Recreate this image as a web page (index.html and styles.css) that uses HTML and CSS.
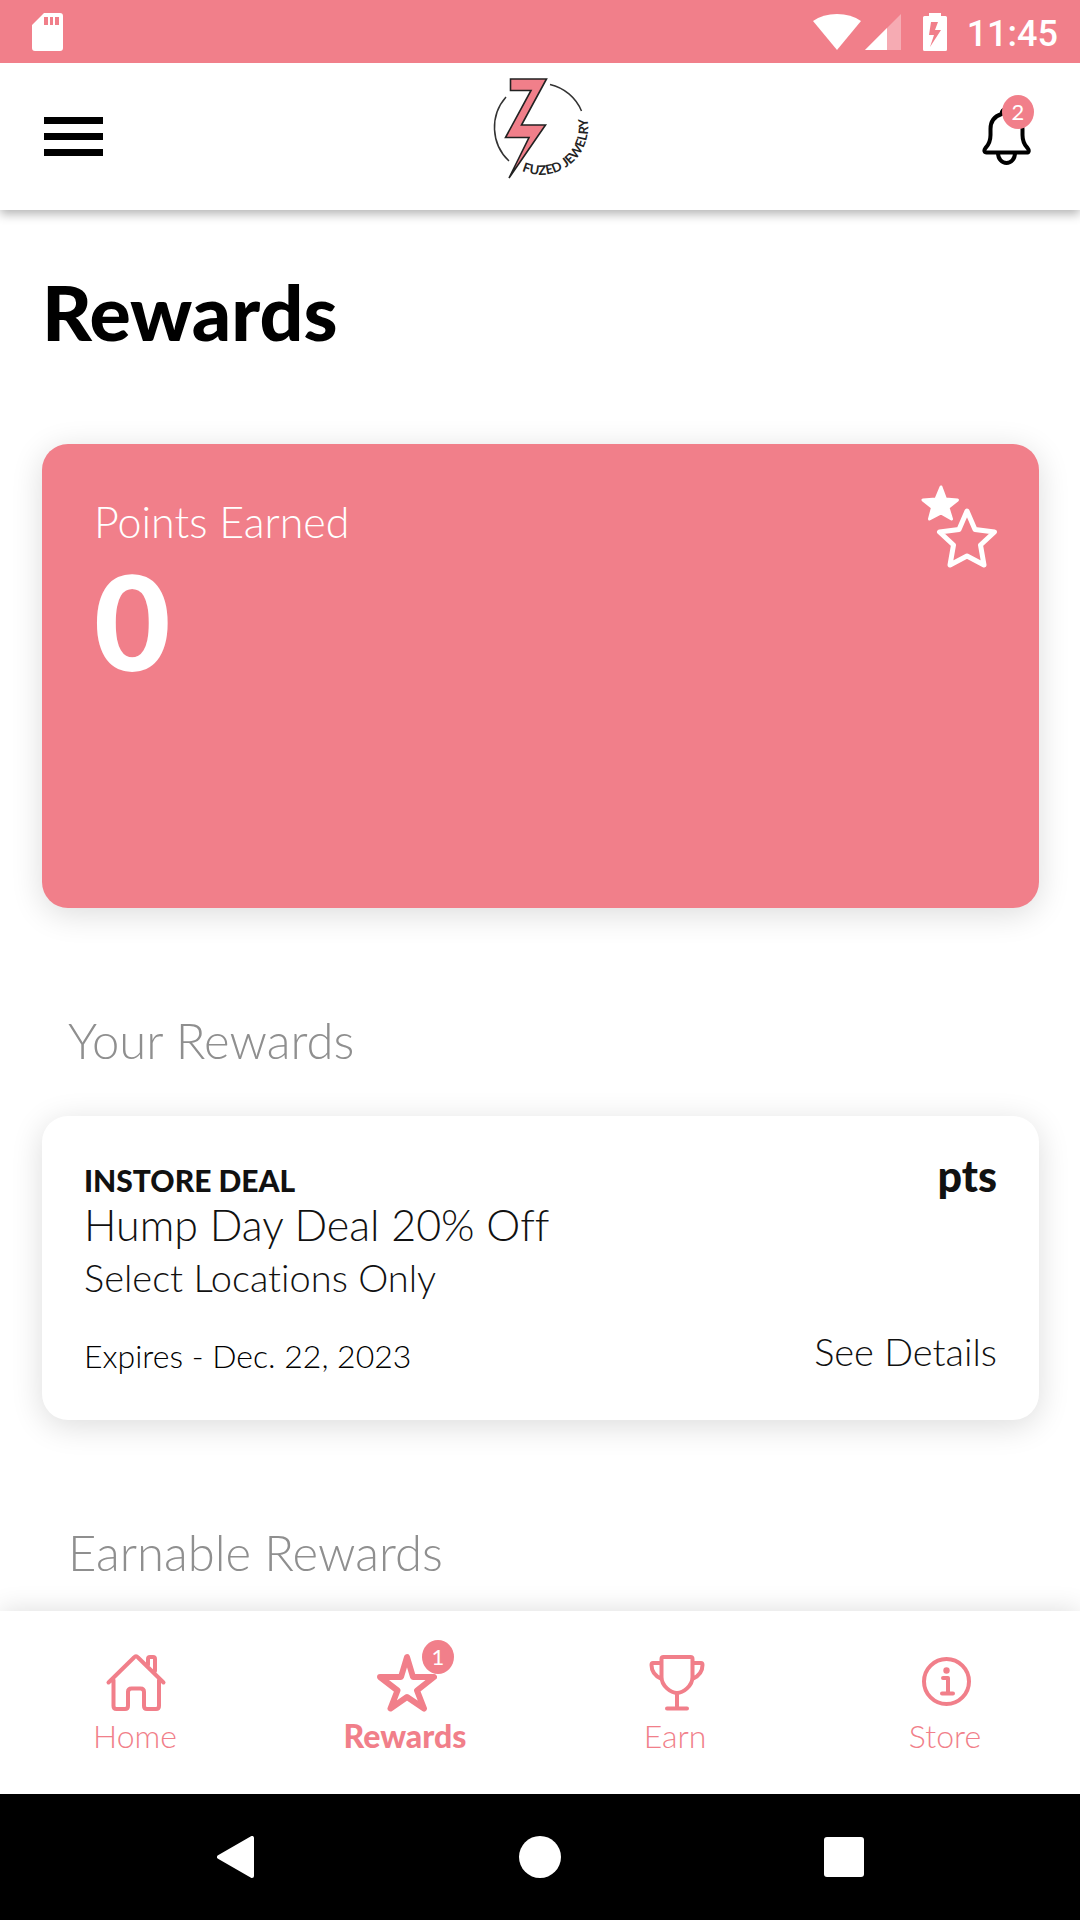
FILE: index.html
```html
<!DOCTYPE html>
<html lang="en">
<head>
<meta charset="utf-8">
<meta name="viewport" content="width=device-width, initial-scale=1">
<title>Rewards - Fuzed Jewelry</title>
<link rel="stylesheet" href="styles.css">
</head>
<body>
<div class="status">
  <svg class="status-card" width="32" height="38" viewBox="0 0 32 38" fill="currentColor" aria-hidden="true"><path fill-rule="evenodd" d="M12 0h16a3 3 0 0 1 3 3v32a3 3 0 0 1-3 3H3a3 3 0 0 1-3-3V12zM12 4v8h4V4zM18 4v8h3V4zM23 4v8h4V4z"/></svg>
  <div class="status-right">
    <svg width="48" height="38" viewBox="0 0 48 38" fill="currentColor" aria-hidden="true"><path d="M24 37 0 8Q10 1 24 1t24 7z"/></svg>
    <svg class="signal" width="36" height="38" viewBox="0 0 36 38" fill="currentColor" aria-hidden="true"><path opacity=".35" d="M0 37 36 1v36z"/><path d="M0 37 22 15v22z"/></svg>
    <svg class="battery" width="24" height="38" viewBox="0 0 24 38" fill="currentColor" aria-hidden="true"><path fill-rule="evenodd" d="M6 0h12v3h4.500a1.500 1.500 0 0 1 1.500 1.500v32a1.500 1.500 0 0 1-1.500 1.500h-21a1.500 1.500 0 0 1-1.500-1.500v-32a1.500 1.500 0 0 1 1.500-1.500H6zM8 9 6 22h5L7 34 18 17h-6l3-8z"/></svg>
    <span class="time">11:45</span>
  </div>
</div>
<header class="header">
  <button class="icon-button menu" type="button" aria-label="Menu">
    <svg width="60" height="40" viewBox="0 0 60 40" aria-hidden="true"><path d="M0 0h59v7H0zM0 16h59v7H0zM0 32h59v7H0z"/></svg>
  </button>
  <svg class="logo" width="104" height="110" viewBox="488 74 104 110" role="img" aria-label="Fuzed Jewelry">
    <g fill="none" stroke="#333" stroke-width="1.500"><path d="M506 97A46 46 0 0 0 509 161"/><path d="M550 84.500A45 45 0 0 1 581.500 111"/></g>
    <path d="M510.500 79H546.500L521.500 125H545.500L509 178 529 137.500H505.500L531 90.500H510.500z" fill="#f17f8a" stroke="#222" stroke-width="1.600"/>
    <path id="ring" d="M522 171A47.500 47.500 0 0 0 584 108" fill="none"/>
    <text class="logo-text"><textPath href="#ring">FUZED JEWELRY</textPath></text>
  </svg>
  <button class="icon-button bell" type="button" aria-label="Notifications">
    <svg width="50" height="60" viewBox="0 0 50 60" fill="none" stroke="#000" stroke-width="4" stroke-linejoin="round" aria-hidden="true"><path d="M24.500 2c-3 0-5 2-5 5C12 9.500 8.500 15 8.500 22v6c0 7-2 10-5 13-2 2.500-1 4.500 1 4.500h40c2.500 0 3-2 1-4.500-3-3-5-6-5-13v-6c0-7-3.500-12.500-11-15 0-3-2-5-5-5z"/><path d="M16 46c0 6 4 10 8.500 10s8.500-4 8.500-10"/></svg>
    <span class="badge">2</span>
  </button>
</header>
<main class="main">
  <h1 class="title">Rewards</h1>
  <section class="card points">
    <div>
      <h2 class="points-label">Points Earned</h2>
      <p class="points-value">0</p>
    </div>
    <svg width="80" height="88" viewBox="0 0 80 88" aria-hidden="true"><path d="M21 3 25.500 15 37.500 16 28 23.500 31.500 35 21 29 9.500 35 12.500 23.500 3 16 16 15z" fill="#fff" stroke="#fff" stroke-width="3" stroke-linejoin="round"/><path d="M47 27 55 45.500 74.500 48 60.500 61 64 81 47 72 30 81 33.500 61 19.500 48 39 45.500z" fill="none" stroke="#fff" stroke-width="5" stroke-linejoin="round"/></svg>
  </section>
  <h2 class="heading">Your Rewards</h2>
  <article class="card reward">
    <div class="reward-info">
      <p class="reward-kind">INSTORE DEAL</p>
      <h3 class="reward-name">Hump Day Deal 20% Off</h3>
      <p class="reward-note">Select Locations Only</p>
      <p class="reward-expiry">Expires - Dec. 22, 2023</p>
    </div>
    <div class="reward-side">
      <p class="reward-points">pts</p>
      <a class="reward-link" href="#details">See Details</a>
    </div>
  </article>
  <h2 class="heading">Earnable Rewards</h2>
</main>
<nav class="tabs" aria-label="Main">
  <a class="tab" href="#home">
    <svg class="tab-icon" viewBox="0 0 64 64" aria-hidden="true"><path d="M5.500 32.500 31 7.500Q33 5 35 7.500L60.500 32.500M10.500 30v26q0 3 3 3H22q3 0 3-3V42q0-3.500 3.500-3.500h9q3.500 0 3.500 3.500v14q0 3 3 3h9q3 0 3-3V30M45 15V9q0-2 2-2h3q2 0 2 2v12"/></svg>
    <span>Home</span>
  </a>
  <a class="tab tab-active" href="#rewards" aria-current="page">
    <svg class="tab-icon tab-star" viewBox="0 0 64 64" aria-hidden="true"><path d="M34 7 28 27H7L24.500 40.500 17.500 58.500 34 47 51 58.500 44 40.500 61 27H40z"/></svg>
    <span>Rewards</span>
    <span class="badge">1</span>
  </a>
  <a class="tab" href="#earn">
    <svg class="tab-icon" viewBox="0 0 64 64" aria-hidden="true"><path d="M18.500 9q0-2 2-2h27q2 0 2 2v18C49.500 36 40 43 34 43S18.500 36 18.500 27zM18.500 13H10q-1.500 0-1.500 2C8.500 22 12 26 18.500 29M49.500 13H58q1.500 0 1.500 2C59.500 22 56 26 49.500 29M34 43v15.500M24 58.500h20"/></svg>
    <span>Earn</span>
  </a>
  <a class="tab" href="#store">
    <svg class="tab-icon" viewBox="0 0 64 64" aria-hidden="true"><circle cx="33.500" cy="31.500" r="22.500"/><path d="M30 28h5v15M29 43.500h11"/><circle cx="33.500" cy="20.500" r="3.200" fill="currentColor" stroke="none"/></svg>
    <span>Store</span>
  </a>
</nav>
<div class="system">
  <button class="icon-button" type="button" aria-label="Back"><svg width="38" height="42" viewBox="0 0 38 42" aria-hidden="true"><path d="M35 2v38L2 21z" fill="#fff" stroke="#fff" stroke-width="4" stroke-linejoin="round"/></svg></button>
  <button class="icon-button" type="button" aria-label="Home screen"><svg width="42" height="42" viewBox="0 0 42 42" aria-hidden="true"><circle cx="21" cy="21" r="21" fill="#fff"/></svg></button>
  <button class="icon-button" type="button" aria-label="Recent apps"><svg width="40" height="40" viewBox="0 0 40 40" aria-hidden="true"><rect width="40" height="40" rx="3" fill="#fff"/></svg></button>
</div>
</body>
</html>
```
FILE: styles.css
```css
:root {
  --pink: #f17f8a;
}

* {
  box-sizing: border-box;
}

body {
  margin: 0;
  min-height: 100vh;
  display: flex;
  flex-direction: column;
  background: #fff;
  color: #111;
  font-family: Lato, "Open Sans", sans-serif;
  font-weight: 300;
  font-variant-ligatures: none;
}

h1, h2, h3, p {
  margin: 0;
  font-weight: inherit;
}

a {
  color: inherit;
  text-decoration: none;
}

svg {
  display: block;
  flex: none;
}

.icon-button {
  padding: 0;
  border: 0;
  background: none;
  font: inherit;
}

.status {
  position: relative;
  z-index: 2;
  display: flex;
  align-items: center;
  justify-content: space-between;
  height: 63px;
  padding: 0 22px 0 32px;
  background: var(--pink);
  color: #fff;
}

.status-right {
  display: flex;
  align-items: center;
}

.signal {
  margin-left: 4px;
}

.battery {
  margin: 0 20px 0 22px;
}

.time {
  font: 500 36px/44px Roboto, sans-serif;
  padding-top: 4px;
}

.header {
  position: relative;
  z-index: 1;
  display: grid;
  grid-template-columns: 1fr auto 1fr;
  align-items: center;
  height: 147px;
  padding: 0 44px;
  background: #fff;
  box-shadow: 0 4px 10px rgba(0, 0, 0, .3);
}

.menu {
  justify-self: start;
}

.logo {
  margin-bottom: 16px;
}

.logo-text {
  font-size: 13px;
  font-weight: 700;
  fill: #222;
}

.bell {
  position: relative;
  justify-self: end;
  margin-right: 4px;
}

.badge {
  position: absolute;
  width: 32px;
  height: 34px;
  border-radius: 50%;
  background: var(--pink);
  color: #fff;
  font: 400 22px/34px Lato, sans-serif;
  text-align: center;
}

.bell .badge {
  top: -12px;
  right: -2px;
}

.main {
  flex: 1;
  padding: 57px 41px 29px 42px;
}

.title {
  margin-bottom: 89px;
  color: #000;
  font-size: 77px;
  font-weight: 900;
  line-height: 88px;
}

.card {
  display: flex;
  justify-content: space-between;
  border-radius: 26px;
  box-shadow: 0 6px 32px rgba(0, 0, 0, .14);
}

.points {
  min-height: 464px;
  padding: 52px 39px 52px 52px;
  background: var(--pink);
  color: #fff;
}

.points svg {
  margin-top: -12px;
}

.points-label {
  font-size: 43px;
  line-height: 52px;
}

.points-value {
  margin-top: 6px;
  font-size: 132px;
  font-weight: 900;
  line-height: 132px;
}

.heading {
  margin-top: 102px;
  padding-left: 26px;
  color: #8f8f8f;
  font-size: 49px;
  line-height: 60px;
}

.reward {
  margin-top: 46px;
  padding: 46px 42px 44px;
  background: #fff;
}

.reward-side {
  display: flex;
  flex-direction: column;
  justify-content: space-between;
  align-items: flex-end;
}

.reward-kind {
  font-size: 30px;
  font-weight: 900;
  line-height: 36px;
}

.reward-name {
  font-size: 43px;
  line-height: 54px;
}

.reward-note {
  font-size: 38px;
  line-height: 50px;
}

.reward-expiry {
  margin-top: 34px;
  color: #000;
  font-size: 32px;
  line-height: 40px;
}

.reward-points {
  font-size: 43px;
  font-weight: 900;
  line-height: 28px;
}

.reward-link {
  font-size: 38px;
  line-height: 50px;
}

.tabs {
  position: sticky;
  bottom: 0;
  display: grid;
  grid-template-columns: repeat(4, 1fr);
  padding: 39px 0;
  background: #fff;
  box-shadow: 0 -2px 24px rgba(0, 0, 0, .12);
}

.tab {
  position: relative;
  display: flex;
  flex-direction: column;
  align-items: center;
  gap: 4px;
  color: var(--pink);
  font-size: 32px;
  line-height: 36px;
  padding-bottom: 1px;
}

.tab-active {
  font-weight: 900;
}

.tab-icon {
  width: 64px;
  height: 64px;
  fill: none;
  stroke: currentColor;
  stroke-width: 4;
  stroke-linecap: round;
  stroke-linejoin: round;
}

.tab-star {
  stroke-width: 6;
}

.tab .badge {
  top: -10px;
  left: calc(50% + 17px);
}

.system {
  display: grid;
  grid-template-columns: repeat(3, 1fr);
  place-items: center;
  height: 126px;
  padding: 0 84px;
  background: #000;
}
```
